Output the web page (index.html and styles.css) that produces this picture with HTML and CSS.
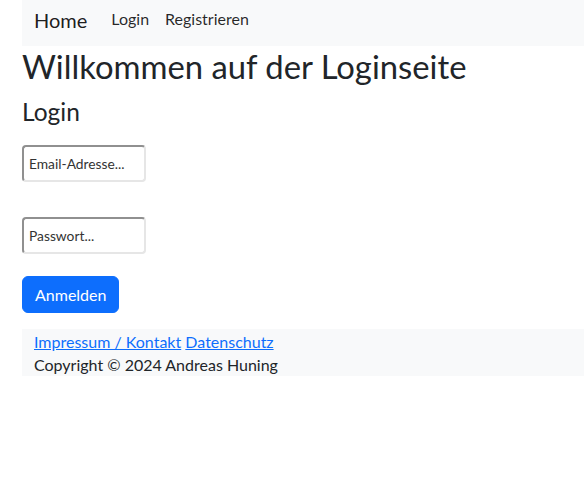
FILE: index.html
```html
<!DOCTYPE html>
<html lang="de">
<head>
<meta charset="utf-8">
<title>Login</title>
<link rel="stylesheet" href="styles.css">
</head>
<body>
<div class="page">
  <nav class="navbar">
    <a class="brand" href="#">Home</a>
    <ul class="nav">
      <li><a class="nav-link" href="#">Login</a></li>
      <li><a class="nav-link" href="#">Registrieren</a></li>
    </ul>
  </nav>
  <h1 class="title">Willkommen auf der Loginseite</h1>
  <h3 class="subtitle">Login</h3>
  <form class="login-form">
    <input class="field field-email" type="email" placeholder="Email-Adresse...">
    <input class="field field-pass" type="password" placeholder="Passwort...">
    <button class="btn-primary" type="button">Anmelden</button>
  </form>
  <footer class="footer">
    <div class="footer-links"><a href="#">Impressum / Kontakt</a> <a href="#">Datenschutz</a></div>
    <div class="copyright">Copyright © 2024 Andreas Huning</div>
  </footer>
</div>
</body>
</html>
```
FILE: styles.css
```css
html, body {
  margin: 0;
  padding: 0;
  background: #fff;
}
body {
  font-family: Lato, "Open Sans", sans-serif;
  font-size: 16px;
  line-height: 1.5;
  color: #212529;
}
.page {
  padding-left: 22px;
}
.navbar {
  display: flex;
  align-items: flex-start;
  background: #f8f9fa;
  height: 46px;
  box-sizing: border-box;
  padding: 5px 12px 0;
}
.brand {
  font-size: 20px;
  line-height: 30px;
  color: rgba(0, 0, 0, 0.9);
  text-decoration: none;
  margin-right: 16px;
}
.nav {
  display: flex;
  list-style: none;
  margin: 0;
  padding: 0;
}
.nav-link {
  display: block;
  padding: 2px 8px;
  color: rgba(0, 0, 0, 0.85);
  text-decoration: none;
}
.title {
  font-size: 32.8px;
  font-weight: 400;
  line-height: 1.2;
  margin: 1px 0 11px;
}
.subtitle {
  font-size: 24.5px;
  font-weight: 400;
  line-height: 1.2;
  margin: 0;
}
.login-form {
  display: flex;
  flex-direction: column;
  align-items: flex-start;
  padding-top: 18px;
  padding-bottom: 16px;
}
.field {
  box-sizing: border-box;
  width: 124px;
  height: 37px;
  padding: 0 5px;
  margin: 0;
  font-family: Lato, "Open Sans", sans-serif;
  font-size: 13.8px;
  color: #212529;
  border: 2px solid;
  border-color: #909090 #e6e6e6 #e6e6e6 #909090;
  border-radius: 4px;
  background: #fff;
  outline: none;
}
.field::placeholder {
  color: #333;
  opacity: 1;
}
.field-pass {
  margin-top: 35px;
}
.btn-primary {
  margin-top: 22px;
  box-sizing: border-box;
  height: 37px;
  padding: 0 12px;
  font-family: Lato, "Open Sans", sans-serif;
  font-size: 16px;
  color: #fff;
  background: #0d6efd;
  border: 1px solid #0d6efd;
  border-radius: 6px;
}
.footer {
  background: #f8f9fa;
  padding: 1px 12px 0;
  line-height: 23px;
}
.footer a {
  color: #0d6efd;
  text-decoration: underline;
}
```
